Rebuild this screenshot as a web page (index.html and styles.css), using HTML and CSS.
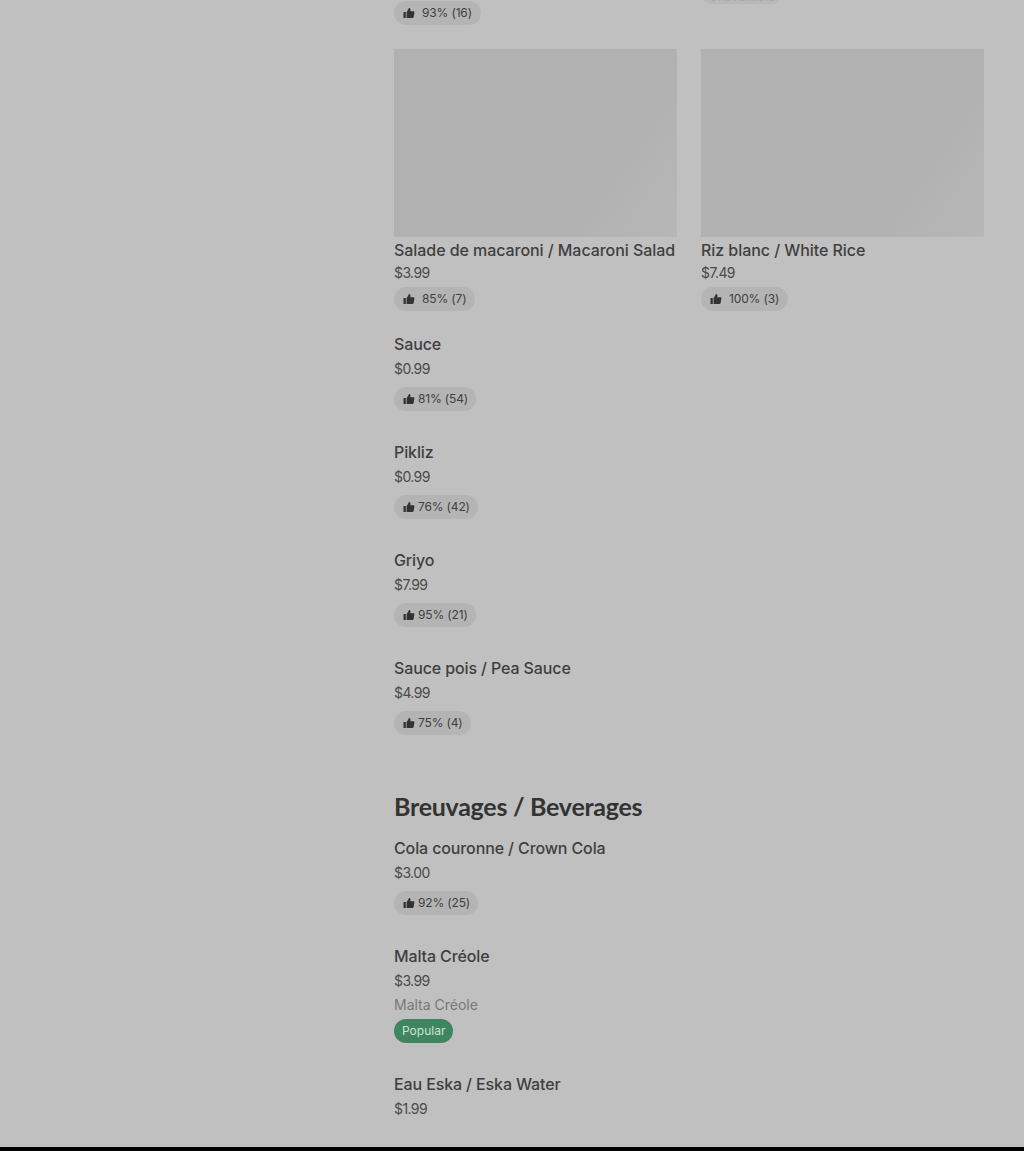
FILE: index.html
```html
<!DOCTYPE html>
<html>
<head>
    <title>Menu</title>
    <link rel="stylesheet" href="styles.css">
</head>
<body>
    <svg class="icon-defs" width="0" height="0">
        <symbol id="thumb" viewBox="0 0 12 12">
            <path d="M0.5 5H2.8V11H0.5Z M3.6 5.2 6 1 Q7.4 1 7.4 2.4V4.3H10.6Q11.6 4.3 11.4 5.4L10.6 10Q10.4 11 9.4 11H3.6Z"/>
        </symbol>
    </svg>
    <div class="page">
        <div class="menu">
            <div class="card-row top-row">
                <div><span class="pill pill-wide"><svg class="thumb"><use href="#thumb"/></svg>93% (16)</span></div>
                <div><span class="faded-tag">Unavailable</span></div>
            </div>

            <div class="card-row">
                <div class="card">
                    <div class="photo"></div>
                    <div class="card-name">Salade de macaroni / Macaroni Salad</div>
                    <div class="card-price">$3.99</div>
                    <span class="pill pill-wide"><svg class="thumb"><use href="#thumb"/></svg>85% (7)</span>
                </div>
                <div class="card">
                    <div class="photo"></div>
                    <div class="card-name">Riz blanc / White Rice</div>
                    <div class="card-price">$7.49</div>
                    <span class="pill pill-wide"><svg class="thumb"><use href="#thumb"/></svg>100% (3)</span>
                </div>
            </div>

            <div class="item">
                <div class="item-name">Sauce</div>
                <div class="item-price">$0.99</div>
                <span class="pill"><svg class="thumb"><use href="#thumb"/></svg>81% (54)</span>
            </div>
            <div class="item">
                <div class="item-name">Pikliz</div>
                <div class="item-price">$0.99</div>
                <span class="pill"><svg class="thumb"><use href="#thumb"/></svg>76% (42)</span>
            </div>
            <div class="item">
                <div class="item-name">Griyo</div>
                <div class="item-price">$7.99</div>
                <span class="pill"><svg class="thumb"><use href="#thumb"/></svg>95% (21)</span>
            </div>
            <div class="item">
                <div class="item-name">Sauce pois / Pea Sauce</div>
                <div class="item-price">$4.99</div>
                <span class="pill"><svg class="thumb"><use href="#thumb"/></svg>75% (4)</span>
            </div>

            <h2 class="section-title">Breuvages / Beverages</h2>

            <div class="item">
                <div class="item-name">Cola couronne / Crown Cola</div>
                <div class="item-price">$3.00</div>
                <span class="pill"><svg class="thumb"><use href="#thumb"/></svg>92% (25)</span>
            </div>
            <div class="item item-tall">
                <div class="item-name">Malta Créole</div>
                <div class="item-price">$3.99</div>
                <div class="item-desc">Malta Créole</div>
                <span class="badge">Popular</span>
            </div>
            <div class="item item-last">
                <div class="item-name">Eau Eska / Eska Water</div>
                <div class="item-price">$1.99</div>
            </div>
        </div>
    </div>
    <div class="footer"></div>
</body>
</html>
```
FILE: styles.css
```css
html, body {
    margin: 0;
    height: 1151px;
    overflow: hidden;
}

body {
    display: flex;
    flex-direction: column;
    background: #c0c0c0;
    color: #333;
    font-family: "Inter", "Roboto", sans-serif;
}

.icon-defs {
    display: block;
}

.page {
    flex: 1;
    overflow: hidden;
    padding: 0 40px 0 394px;
}

.footer {
    height: 4px;
    background: #000;
}

.card-row {
    display: grid;
    grid-template-columns: 283px 283px;
    gap: 24px;
}

.top-row {
    height: 49px;
    overflow: hidden;
}

.top-row .pill {
    margin-top: 1px;
}

.faded-tag {
    display: block;
    width: 76px;
    margin-top: -11px;
    margin-left: 2px;
    padding: 1px 0 0 6px;
    height: 15px;
    box-sizing: border-box;
    border-radius: 8px;
    background: #b8b8b8;
    color: #a9a9a9;
    font-size: 12px;
    line-height: 14px;
}

.photo {
    height: 188px;
    background: linear-gradient(125deg, #b1b1b1 70%, #b7b7b7 100%);
}

.card {
    height: 283px;
}

.card-name {
    margin-top: 3px;
    font-size: 16px;
    line-height: 20px;
    font-weight: 500;
    letter-spacing: -0.06px;
    color: #3f3f3f;
    white-space: nowrap;
}

.card-price {
    margin-top: 3px;
    font-size: 14px;
    line-height: 20px;
    color: #4a4a4a;
    letter-spacing: -0.6px;
}

.card .pill {
    margin-top: 4px;
}

.item {
    height: 108px;
}

.item-tall {
    height: 128px;
}

.item-last {
    height: auto;
}

.item-name {
    font-size: 16px;
    line-height: 24px;
    font-weight: 500;
    letter-spacing: -0.12px;
    color: #3f3f3f;
}

.item-price {
    margin-top: 1px;
    font-size: 14px;
    line-height: 24px;
    color: #4a4a4a;
    letter-spacing: -0.6px;
}

.item-desc {
    font-size: 14px;
    line-height: 24px;
    color: #787878;
}

.pill {
    display: inline-flex;
    align-items: center;
    gap: 3px;
    box-sizing: border-box;
    height: 24px;
    margin-top: 6px;
    padding: 0 8px 1px 9px;
    border-radius: 12px;
    background: #b4b4b4;
    color: #3f3f3f;
    font-size: 12px;
    letter-spacing: -0.15px;
    white-space: nowrap;
}

.pill-wide {
    gap: 7px;
    padding-right: 9px;
}

.thumb {
    width: 12px;
    height: 12px;
    margin-top: 1px;
    fill: #333;
}

.badge {
    display: inline-block;
    height: 24px;
    margin-top: 2px;
    padding: 0 8px;
    border-radius: 12px;
    background: #3f8660;
    color: #c8e4d6;
    font-size: 12px;
    line-height: 24px;
}

.section-title {
    margin: 0;
    padding: 27px 0 15px;
    font-family: "Lato", "Inter", sans-serif;
    font-size: 25px;
    line-height: 30px;
    font-weight: 700;
    letter-spacing: -0.27px;
    color: #333;
}
```
